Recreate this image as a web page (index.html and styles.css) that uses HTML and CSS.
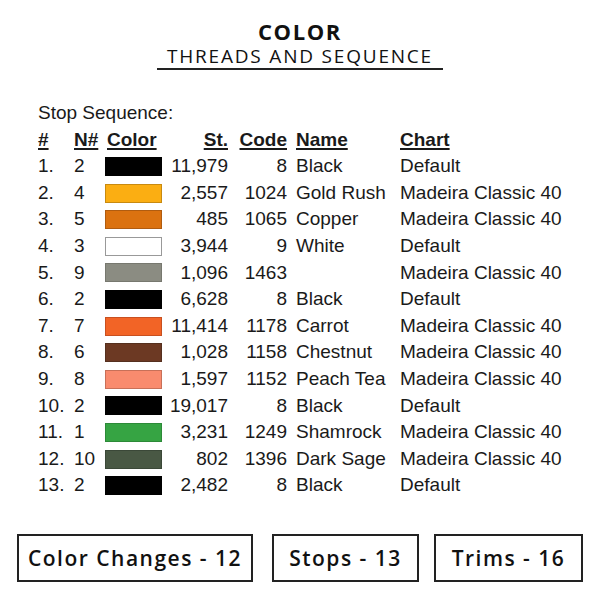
FILE: index.html
```html
<!DOCTYPE html>
<html>
<head>
<meta charset="utf-8">
<link rel="stylesheet" href="styles.css">
</head>
<body>
<div class="page">
  <header class="title">
    <h1>COLOR</h1>
    <h2>THREADS AND SEQUENCE</h2>
  </header>
  <section class="seq">
    <p class="label">Stop Sequence:</p>
    <div class="table">
      <div class="row head">
        <span class="c-num">#</span><span class="c-n">N#</span><span class="c-color">Color</span><span class="c-st">St.</span><span class="c-code">Code</span><span class="c-name">Name</span><span class="c-chart">Chart</span>
      </div>
      <div class="row"><span class="c-num">1.</span><span class="c-n">2</span><span class="c-color"><i class="sw sw-black"></i></span><span class="c-st">11,979</span><span class="c-code">8</span><span class="c-name">Black</span><span class="c-chart">Default</span></div>
      <div class="row"><span class="c-num">2.</span><span class="c-n">4</span><span class="c-color"><i class="sw sw-gold"></i></span><span class="c-st">2,557</span><span class="c-code">1024</span><span class="c-name">Gold Rush</span><span class="c-chart">Madeira Classic 40</span></div>
      <div class="row"><span class="c-num">3.</span><span class="c-n">5</span><span class="c-color"><i class="sw sw-copper"></i></span><span class="c-st">485</span><span class="c-code">1065</span><span class="c-name">Copper</span><span class="c-chart">Madeira Classic 40</span></div>
      <div class="row"><span class="c-num">4.</span><span class="c-n">3</span><span class="c-color"><i class="sw sw-white"></i></span><span class="c-st">3,944</span><span class="c-code">9</span><span class="c-name">White</span><span class="c-chart">Default</span></div>
      <div class="row"><span class="c-num">5.</span><span class="c-n">9</span><span class="c-color"><i class="sw sw-gray"></i></span><span class="c-st">1,096</span><span class="c-code">1463</span><span class="c-name"></span><span class="c-chart">Madeira Classic 40</span></div>
      <div class="row"><span class="c-num">6.</span><span class="c-n">2</span><span class="c-color"><i class="sw sw-black"></i></span><span class="c-st">6,628</span><span class="c-code">8</span><span class="c-name">Black</span><span class="c-chart">Default</span></div>
      <div class="row"><span class="c-num">7.</span><span class="c-n">7</span><span class="c-color"><i class="sw sw-carrot"></i></span><span class="c-st">11,414</span><span class="c-code">1178</span><span class="c-name">Carrot</span><span class="c-chart">Madeira Classic 40</span></div>
      <div class="row"><span class="c-num">8.</span><span class="c-n">6</span><span class="c-color"><i class="sw sw-chestnut"></i></span><span class="c-st">1,028</span><span class="c-code">1158</span><span class="c-name">Chestnut</span><span class="c-chart">Madeira Classic 40</span></div>
      <div class="row"><span class="c-num">9.</span><span class="c-n">8</span><span class="c-color"><i class="sw sw-peach"></i></span><span class="c-st">1,597</span><span class="c-code">1152</span><span class="c-name">Peach Tea</span><span class="c-chart">Madeira Classic 40</span></div>
      <div class="row"><span class="c-num">10.</span><span class="c-n">2</span><span class="c-color"><i class="sw sw-black"></i></span><span class="c-st">19,017</span><span class="c-code">8</span><span class="c-name">Black</span><span class="c-chart">Default</span></div>
      <div class="row"><span class="c-num">11.</span><span class="c-n">1</span><span class="c-color"><i class="sw sw-shamrock"></i></span><span class="c-st">3,231</span><span class="c-code">1249</span><span class="c-name">Shamrock</span><span class="c-chart">Madeira Classic 40</span></div>
      <div class="row"><span class="c-num">12.</span><span class="c-n">10</span><span class="c-color"><i class="sw sw-sage"></i></span><span class="c-st">802</span><span class="c-code">1396</span><span class="c-name">Dark Sage</span><span class="c-chart">Madeira Classic 40</span></div>
      <div class="row"><span class="c-num">13.</span><span class="c-n">2</span><span class="c-color"><i class="sw sw-black"></i></span><span class="c-st">2,482</span><span class="c-code">8</span><span class="c-name">Black</span><span class="c-chart">Default</span></div>
    </div>
  </section>
  <div class="stats">
    <div class="box box-changes">Color Changes - 12</div>
    <div class="box box-stops">Stops - 13</div>
    <div class="box box-trims">Trims - 16</div>
  </div>
</div>
</body>
</html>
```

FILE: styles.css
```css
* { box-sizing: border-box; }
html, body { margin: 0; padding: 0; background: #fff; }
body { width: 600px; height: 600px; overflow: hidden; color: #1a1a1a; }

.page { padding-top: 19px; }

.title {
  width: 286px;
  margin: 0 auto;
  text-align: center;
  border-bottom: 2px solid #222;
  font-family: "Open Sans", "DejaVu Sans", sans-serif;
}
.title h1 {
  margin: 0;
  font-size: 22px;
  line-height: 24px;
  font-weight: 700;
  letter-spacing: 1.6px;
  color: #111;
}
.title h2 {
  margin: 1px 0 0;
  font-size: 19px;
  line-height: 24px;
  font-weight: 400;
  letter-spacing: 1.8px;
  color: #111;
}

.seq {
  margin-top: 30px;
  padding-left: 38px;
  font-family: "Liberation Sans", Arial, sans-serif;
  font-size: 19px;
  color: #1a1a1a;
}
.label { margin: 0; line-height: 26.6px; }

.row {
  display: grid;
  grid-template-columns: 36px 31px 57px 66px 59px 113px auto;
  height: 26.6px;
  line-height: 26.6px;
  align-items: center;
  white-space: nowrap;
}
.c-st, .c-code { text-align: right; }
.c-name { padding-left: 9px; }
.c-color { display: flex; align-items: center; height: 26.6px; }

.head span {
  font-weight: 700;
  text-decoration: underline;
  text-underline-offset: 2px;
  text-decoration-thickness: 2px;
}
.head .c-color { padding-left: 2px; }

.sw {
  display: block;
  width: 57px;
  height: 19px;
  border: 1px solid #6a6a6a;
}
.sw-black { background: #000; border-color: #000; }
.sw-gold { background: #fbae12; border-color: #c88a10; }
.sw-copper { background: #db7210; border-color: #b05c10; }
.sw-white { background: #fff; border-color: #999; }
.sw-gray { background: #8b8c82; border-color: #77786f; }
.sw-carrot { background: #f26426; border-color: #c85020; }
.sw-chestnut { background: #6c3923; border-color: #55301f; }
.sw-peach { background: #f98b6e; border-color: #c87058; }
.sw-shamrock { background: #36a443; border-color: #2c8a38; }
.sw-sage { background: #495844; border-color: #3b4838; }

.stats {
  display: flex;
  margin-top: 35px;
  padding-left: 17px;
  font-family: "Open Sans", "DejaVu Sans", sans-serif;
}
.box {
  height: 48px;
  border: 2px solid #222;
  display: flex;
  align-items: center;
  justify-content: center;
  font-size: 21px;
  font-weight: 600;
  letter-spacing: 1.5px;
  color: #111;
  white-space: nowrap;
}
.box-changes { width: 236px; }
.box-stops { width: 147px; margin-left: 19px; }
.box-trims { width: 149px; margin-left: 15px; }
```
